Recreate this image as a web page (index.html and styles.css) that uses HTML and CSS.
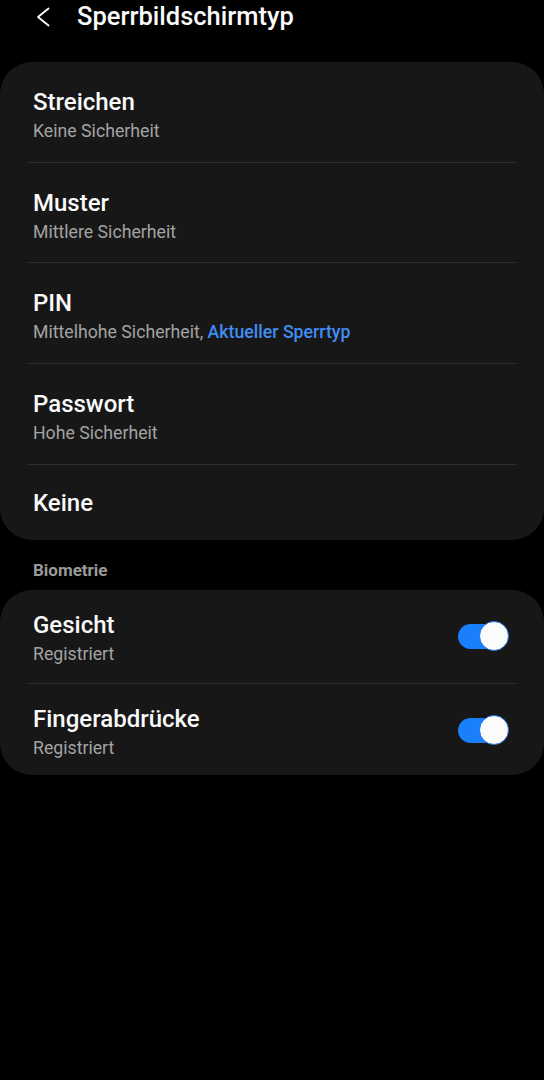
FILE: index.html
```html
<!DOCTYPE html>
<html lang="de">

<head>
    <meta charset="UTF-8">
    <meta name="viewport" content="width=device-width, initial-scale=1.0">
    <title>Sperrbildschirmtyp</title>
    <link rel="stylesheet" href="styles.css">
</head>

<body>
    <header class="topbar">
        <svg class="back" width="16" height="20" viewBox="0 0 16 20">
            <path d="M13.5 1.5 L3 10 L13.5 18.5" fill="none" stroke="#fff" stroke-width="1.8" stroke-linecap="round" stroke-linejoin="round"/>
        </svg>
        <h1 class="title">Sperrbildschirmtyp</h1>
    </header>

    <section class="card">
        <div class="row">
            <div class="name">Streichen</div>
            <div class="sub">Keine Sicherheit</div>
        </div>
        <div class="row short">
            <div class="name">Muster</div>
            <div class="sub">Mittlere Sicherheit</div>
        </div>
        <div class="row">
            <div class="name">PIN</div>
            <div class="sub">Mittelhohe Sicherheit, <span class="current">Aktueller Sperrtyp</span></div>
        </div>
        <div class="row">
            <div class="name">Passwort</div>
            <div class="sub">Hohe Sicherheit</div>
        </div>
        <div class="row single">
            <div class="name">Keine</div>
        </div>
    </section>

    <p class="group">Biometrie</p>

    <section class="card bio">
        <div class="row toggle-row">
            <div>
                <div class="name">Gesicht</div>
                <div class="sub">Registriert</div>
            </div>
            <span class="switch"><span class="knob"></span></span>
        </div>
        <div class="row toggle-row last">
            <div>
                <div class="name">Fingerabdrücke</div>
                <div class="sub">Registriert</div>
            </div>
            <span class="switch"><span class="knob"></span></span>
        </div>
    </section>
</body>

</html>
```

FILE: styles.css
```css
body {
    margin: 0;
    background: #000;
    color: #fafafa;
    font-family: Roboto, "Liberation Sans", sans-serif;
    width: 544px;
    height: 1080px;
    overflow: hidden;
}

.topbar {
    display: flex;
    align-items: center;
    height: 32px;
    padding-left: 35px;
}

.back {
    margin-right: 26px;
    margin-top: 2px;
}

.title {
    margin: 0;
    font-size: 25.5px;
    font-weight: 500;
}

.card {
    margin-top: 30px;
    background: #171717;
    border-radius: 32px;
    padding: 0 27px;
}

.row {
    display: flex;
    flex-direction: column;
    justify-content: center;
    height: 101px;
    padding: 8px 0 0 6px;
    border-bottom: 1px solid #2e2e2e;
    box-sizing: border-box;
}

.row.short {
    height: 100px;
}

.row.single {
    height: 75px;
    padding-top: 0;
    border-bottom: none;
}

.name {
    font-size: 24px;
    font-weight: 500;
    line-height: 30px;
}

.sub {
    font-size: 17.7px;
    color: #a3a3a3;
    line-height: 28px;
}

.current {
    color: #3f8ef4;
    font-weight: 500;
}

.group {
    margin: 19px 0 0 33px;
    font-size: 17px;
    font-weight: 700;
    color: #9a9a9a;
    line-height: 22px;
}

.card.bio {
    margin-top: 9px;
}

.row.toggle-row {
    flex-direction: row;
    align-items: center;
    justify-content: space-between;
    height: 94px;
    padding-top: 4px;
    padding-right: 9px;
}

.row.toggle-row.last {
    height: 91px;
    padding-top: 6px;
    border-bottom: none;
}

.switch {
    position: relative;
    width: 50px;
    height: 25px;
    margin-top: -5px;
    border-radius: 13px;
    background: #1a7ffb;
}

.knob {
    position: absolute;
    right: -1px;
    top: -3px;
    width: 28px;
    height: 28px;
    border-radius: 50%;
    background: #fbfbfb;
    border: 1.5px solid #1a6fe0;
}
```
